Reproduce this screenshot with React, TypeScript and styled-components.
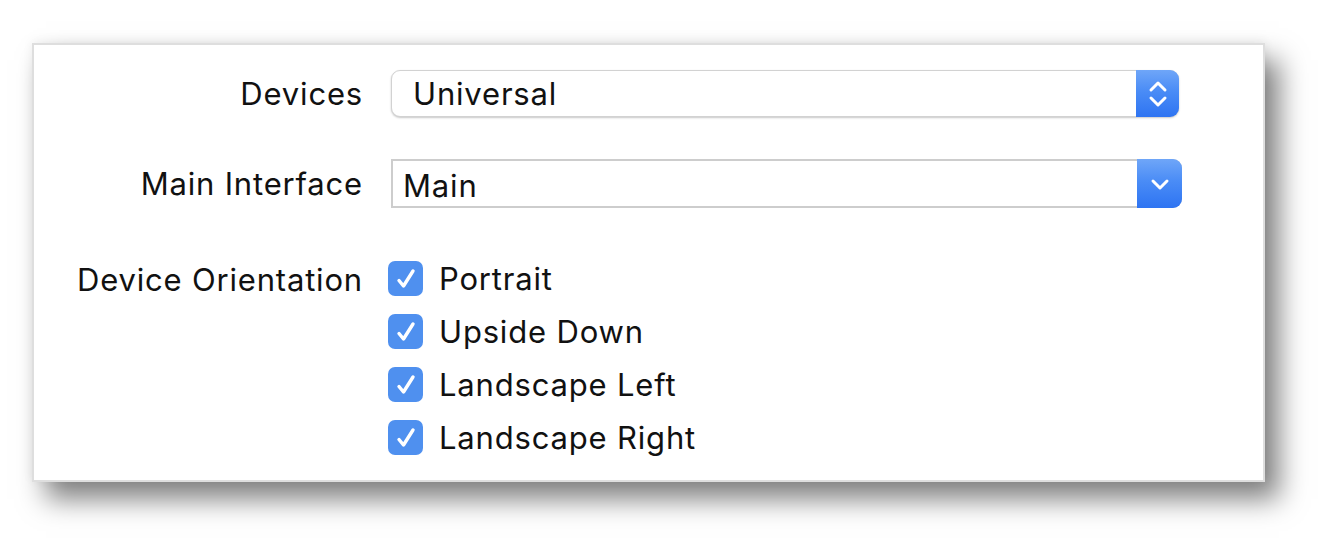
import React from "react";
import styled, { createGlobalStyle } from "styled-components";

const GlobalStyle = createGlobalStyle`
    html, body {
        margin: 0;
        padding: 0;
        background: #ffffff;
    }
    body {
        font-family: Inter, "Liberation Sans", sans-serif;
        color: #111111;
    }
`;

const Page = styled.div`
    width: 1322px;
    height: 554px;
    padding: 43px 0 0 32px;
    box-sizing: border-box;
`;

const Panel = styled.div`
    width: 1233px;
    height: 439px;
    box-sizing: border-box;
    background: #ffffff;
    border: 2px solid #dedede;
    box-shadow: 14px 17px 26px rgba(0, 0, 0, 0.5), 0 -2px 10px rgba(0, 0, 0, 0.06);
    padding-top: 25px;
    display: grid;
    grid-template-columns: 329px 791px;
    column-gap: 28px;
    grid-template-rows: 47px 49px auto;
    row-gap: 42px;
    align-items: center;
`;

const Label = styled.div<{ $top?: boolean }>`
    font-size: 31px;
    letter-spacing: 0.82px;
    text-align: right;
    white-space: nowrap;
    align-self: ${props => (props.$top ? "start" : "center")};
    margin-top: ${props => (props.$top ? "11px" : "0")};
`;

const Popup = styled.div<{ $pulldown?: boolean }>`
    height: 100%;
    display: flex;
    align-items: stretch;
    box-sizing: border-box;
    border-style: solid;
    border-color: ${props => (props.$pulldown ? "#cdcdcd" : "#d2d2d2")};
    border-width: ${props => (props.$pulldown ? "2px" : "1px")};
    border-radius: ${props => (props.$pulldown ? "0 9px 9px 0" : "9px")};
    box-shadow: ${props => (props.$pulldown ? "none" : "0 1px 2px rgba(0,0,0,0.22)")};
    background: #ffffff;
    width: ${props => (props.$pulldown ? "791px" : "788px")};
`;

const PopupText = styled.div<{ $pulldown?: boolean }>`
    flex: 1;
    display: flex;
    align-items: center;
    font-size: 31px;
    letter-spacing: 0.82px;
    padding-left: ${props => (props.$pulldown ? "10px" : "21px")};
    padding-top: ${props => (props.$pulldown ? "4px" : "0")};
`;

const Arrows = styled.div`
    width: 43px;
    margin: -1px -1px -1px 0;
    border-radius: 0 9px 9px 0;
    background: linear-gradient(180deg, #6fa6f8 0%, #4a8cf6 45%, #2e74f2 100%);
    display: flex;
    align-items: center;
    justify-content: center;
`;

const PulldownArrows = styled(Arrows)`
    margin: -2px -2px -2px 0;
    width: 45px;
`;

const CheckList = styled.div`
    align-self: start;
    margin-left: -3px;
    margin-top: 2px;
    display: flex;
    flex-direction: column;
`;

const CheckRow = styled.div`
    height: 53px;
    display: flex;
    align-items: center;
    gap: 16px;
    font-size: 31px;
    letter-spacing: 0.82px;
`;

const Box = styled.div`
    width: 35px;
    height: 35px;
    border-radius: 7px;
    background: #4f90ef;
    display: flex;
    align-items: center;
    justify-content: center;
    flex-shrink: 0;
`;

const UpDown = () => (
    <svg width="22" height="30" viewBox="0 0 22 30" fill="none">
        <path d="M4 11 L11 4 L18 11" stroke="#fff" strokeWidth="3" strokeLinecap="round" strokeLinejoin="round" />
        <path d="M4 19 L11 26 L18 19" stroke="#fff" strokeWidth="3" strokeLinecap="round" strokeLinejoin="round" />
    </svg>
);

const Down = () => (
    <svg width="22" height="14" viewBox="0 0 22 14" fill="none">
        <path d="M4 4 L11 11 L18 4" stroke="#fff" strokeWidth="3" strokeLinecap="round" strokeLinejoin="round" />
    </svg>
);

const Check = () => (
    <svg width="24" height="24" viewBox="0 0 24 24" fill="none">
        <path d="M5 13.5 L9.5 19 L19 4" stroke="#fff" strokeWidth="3.4" strokeLinecap="round" strokeLinejoin="round" />
    </svg>
);

const orientations = ["Portrait", "Upside Down", "Landscape Left", "Landscape Right"];

export default function App() {
    return (
        <Page>
            <GlobalStyle />
            <Panel>
                <Label>Devices</Label>
                <Popup>
                    <PopupText>Universal</PopupText>
                    <Arrows>
                        <UpDown />
                    </Arrows>
                </Popup>

                <Label>Main Interface</Label>
                <Popup $pulldown>
                    <PopupText $pulldown>Main</PopupText>
                    <PulldownArrows>
                        <Down />
                    </PulldownArrows>
                </Popup>

                <Label $top>Device Orientation</Label>
                <CheckList>
                    {orientations.map(o => (
                        <CheckRow key={o}>
                            <Box>
                                <Check />
                            </Box>
                            {o}
                        </CheckRow>
                    ))}
                </CheckList>
            </Panel>
        </Page>
    );
}
